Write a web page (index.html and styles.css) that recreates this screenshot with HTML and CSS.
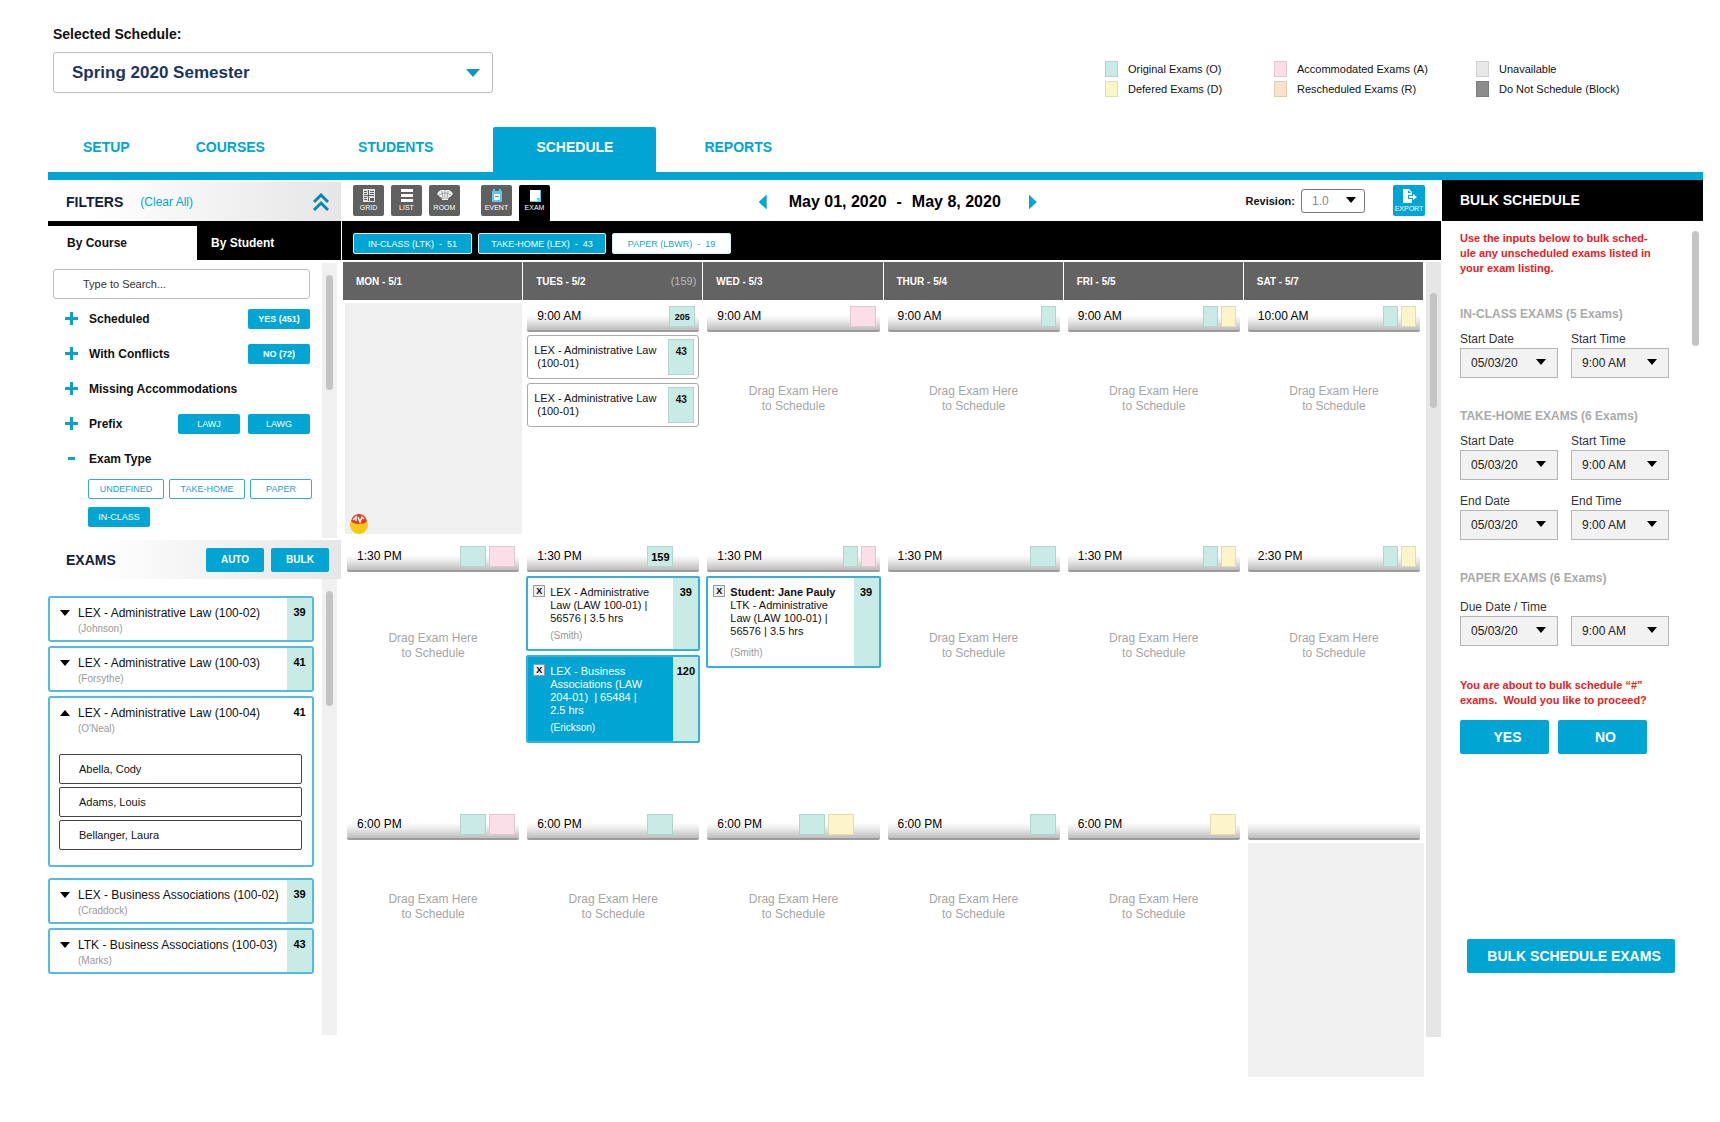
FILE: index.html
```html
<!DOCTYPE html>
<html lang="en">
<head>
    <meta charset="UTF-8">
    <title>Exam Schedule</title>
    <link rel="stylesheet" href="styles.css">
</head>
<body>
    <header class="page-header">
        <div class="schedule-picker">
            <label for="schedule">Selected Schedule:</label>
            <div class="select select-schedule">
                <select id="schedule"><option>Spring 2020 Semester</option></select>
            </div>
        </div>
        <ul class="legend">
            <li><span class="key original"></span>Original Exams (O)</li>
            <li><span class="key accommodated"></span>Accommodated Exams (A)</li>
            <li><span class="key unavailable"></span>Unavailable</li>
            <li><span class="key defered"></span>Defered Exams (D)</li>
            <li><span class="key rescheduled"></span>Rescheduled Exams (R)</li>
            <li><span class="key blocked"></span>Do Not Schedule (Block)</li>
        </ul>
    </header>

    <nav class="main-tabs">
        <a href="#" class="tab">SETUP</a>
        <a href="#" class="tab">COURSES</a>
        <a href="#" class="tab tab-wide">STUDENTS</a>
        <a href="#" class="tab active">SCHEDULE</a>
        <a href="#" class="tab">REPORTS</a>
    </nav>

    <main class="workspace">
        <aside class="sidebar">
            <div class="panel-head">
                <h2>FILTERS</h2>
                <a href="#" class="clear">(Clear All)</a>
                <button class="collapse" aria-label="Collapse filters">
                    <svg width="16" height="18" viewBox="0 0 16 18" fill="none" stroke="#0d86ad" stroke-width="3"><path d="M1 9l7-7 7 7M1 17l7-7 7 7"/></svg>
                </button>
            </div>
            <div class="filter-tabs">
                <button class="filter-tab current">By Course</button>
                <button class="filter-tab">By Student</button>
            </div>
            <div class="scroll-area filter-area">
                <div class="filters">
                    <input class="search" type="text" placeholder="Type to Search..." aria-label="Search">
                    <div class="filter-row"><span class="plus"></span><b>Scheduled</b><button class="chip strong">YES (451)</button></div>
                    <div class="filter-row"><span class="plus"></span><b>With Conflicts</b><button class="chip strong">NO (72)</button></div>
                    <div class="filter-row"><span class="plus"></span><b>Missing Accommodations</b></div>
                    <div class="filter-row"><span class="plus"></span><b>Prefix</b><button class="chip">LAWJ</button><button class="chip">LAWG</button></div>
                    <div class="filter-row"><span class="minus"></span><b>Exam Type</b></div>
                    <div class="type-chips">
                        <button class="chip outline long">UNDEFINED</button>
                        <button class="chip outline long">TAKE-HOME</button>
                        <button class="chip outline">PAPER</button>
                        <button class="chip">IN-CLASS</button>
                    </div>
                </div>
                <div class="track"><div class="thumb"></div></div>
            </div>

            <div class="panel-head exams-head">
                <h2>EXAMS</h2>
                <button class="small-btn">AUTO</button>
                <button class="small-btn">BULK</button>
            </div>
            <div class="scroll-area exam-area">
                <div class="exam-list">
                    <div class="exam-item">
                        <button class="caret" aria-label="Expand"></button>
                        <div class="exam-name">LEX - Administrative Law (100-02)<small>(Johnson)</small></div>
                        <div class="count">39</div>
                    </div>
                    <div class="exam-item">
                        <button class="caret" aria-label="Expand"></button>
                        <div class="exam-name">LEX - Administrative Law (100-03)<small>(Forsythe)</small></div>
                        <div class="count">41</div>
                    </div>
                    <div class="exam-item open">
                        <button class="caret up" aria-label="Collapse"></button>
                        <div class="exam-name">LEX - Administrative Law (100-04)<small>(O'Neal)</small></div>
                        <div class="count">41</div>
                        <ul class="students">
                            <li>Abella, Cody</li>
                            <li>Adams, Louis</li>
                            <li>Bellanger, Laura</li>
                        </ul>
                    </div>
                    <div class="exam-item">
                        <button class="caret" aria-label="Expand"></button>
                        <div class="exam-name">LEX - Business Associations (100-02)<small>(Craddock)</small></div>
                        <div class="count">39</div>
                    </div>
                    <div class="exam-item">
                        <button class="caret" aria-label="Expand"></button>
                        <div class="exam-name">LTK - Business Associations (100-03)<small>(Marks)</small></div>
                        <div class="count">43</div>
                    </div>
                </div>
                <div class="track"><div class="thumb"></div></div>
            </div>
        </aside>

        <section class="calendar">
            <div class="toolbar">
                <div class="views">
                    <button class="view">
                        <svg width="14" height="13" viewBox="0 0 14 13"><path fill="#e4e4e4" d="M1 0h12v13H1z"/><path fill="#606060" d="M2 2h3v1H2zM2 4h3v1H2zM6 1h1v11H6zM8 2h4v1H8zM8 4h4v1H8zM2 6h10v1H2zM2 8h3v1H2zM2 10h3v1H2zM8 9h4v3H8z"/></svg>
                        GRID
                    </button>
                    <button class="view">
                        <svg width="14" height="13" viewBox="0 0 14 13"><path fill="#fff" d="M1 0h12v3H1zM1 5h12v3H1zM1 10h12v3H1z"/></svg>
                        LIST
                    </button>
                    <button class="view">
                        <svg width="16" height="13" viewBox="0 0 16 13"><path fill="#eee" d="M0 5Q2 1 5 1h6q3 0 5 4l-3 3q-2 0-2 3H5q0-3-2-3z"/><path stroke="#8a8a8a" stroke-width=".7" fill="none" d="M2 6Q8 2 14 6M5 2l1 8M11 2l-1 8M8 1v9"/></svg>
                        ROOM
                    </button>
                    <button class="view event">
                        <svg width="14" height="13" viewBox="0 0 14 13"><path fill="#5cc8ee" d="M2 2h1V0h2v2h4V0h2v2h1v11H2z"/><path fill="#fff" d="M4 5h6v6H4z"/><path fill="#1fa5d2" d="M5 7h4v1H5z"/></svg>
                        EVENT
                    </button>
                    <button class="view selected">
                        <svg width="14" height="13" viewBox="0 0 14 13"><path fill="#5cc8ee" d="M2 1h11v12H2z"/><path fill="#fff" d="M2 1h10v9l-2 2H2z"/><path fill="#5cc8ee" d="M9 12V9h4z"/></svg>
                        EXAM
                    </button>
                </div>
                <div class="dates">
                    <button class="step prev" aria-label="Previous week"></button>
                    <span>May 01, 2020</span><span>-</span><span>May 8, 2020</span>
                    <button class="step next" aria-label="Next week"></button>
                </div>
                <div class="revision">
                    <label for="revision">Revision:</label>
                    <div class="select select-revision"><select id="revision"><option>1.0</option></select></div>
                    <button class="view export">
                        <svg width="18" height="14" viewBox="0 0 18 14"><path fill="#fff" d="M3 0h6l3 3v3H8v4h4v4H3z"/><path fill="#fff" d="M9 7h4V5l4 3-4 3V9H9z"/><path fill="#00a5d3" d="M8 1v3h3z"/></svg>
                        EXPORT
                    </button>
                </div>
            </div>
            <div class="type-bar">
                <button class="type-btn">IN-CLASS (LTK) &nbsp;- &nbsp;51</button>
                <button class="type-btn wide">TAKE-HOME (LEX) &nbsp;- &nbsp;43</button>
                <button class="type-btn off">PAPER (LBWR) &nbsp;- &nbsp;19</button>
            </div>
            <div class="scroll-area calendar-area">
                <div class="days">
                    <div class="day">MON - 5/1</div>
                    <div class="day">TUES - 5/2 <span>(159)</span></div>
                    <div class="day">WED - 5/3</div>
                    <div class="day">THUR - 5/4</div>
                    <div class="day">FRI - 5/5</div>
                    <div class="day">SAT - 5/7</div>

                    <!-- morning -->
                    <div class="cell morning closed">
                        <svg class="warning" width="20" height="22" viewBox="0 0 20 22"><circle cx="10" cy="12" r="9" fill="#fbc70f"/><path d="M2 8Q4 1 10 1t8 7q-2 3-8 3T2 8z" fill="#e23a22"/><path d="M4 7l3-3v4M9 4l2 5 2-5 2 2" fill="none" stroke="#fff" stroke-width="1.5"/></svg>
                    </div>
                    <div class="cell morning">
                        <div class="time">9:00 AM<i class="key original big">205</i></div>
                        <div class="slot-exam"><p>LEX - Administrative Law<br>&nbsp;(100-01)</p><i class="key original">43</i></div>
                        <div class="slot-exam"><p>LEX - Administrative Law<br>&nbsp;(100-01)</p><i class="key original">43</i></div>
                    </div>
                    <div class="cell morning">
                        <div class="time">9:00 AM<i class="key accommodated big"></i></div>
                        <p class="drop">Drag Exam Here<br>to Schedule</p>
                    </div>
                    <div class="cell morning">
                        <div class="time">9:00 AM<i class="key original"></i></div>
                        <p class="drop">Drag Exam Here<br>to Schedule</p>
                    </div>
                    <div class="cell morning">
                        <div class="time">9:00 AM<i class="key original"></i><i class="key defered"></i></div>
                        <p class="drop">Drag Exam Here<br>to Schedule</p>
                    </div>
                    <div class="cell morning">
                        <div class="time">10:00 AM<i class="key original"></i><i class="key defered"></i></div>
                        <p class="drop">Drag Exam Here<br>to Schedule</p>
                    </div>

                    <!-- afternoon -->
                    <div class="cell afternoon">
                        <div class="time">1:30 PM<i class="key original big"></i><i class="key accommodated big"></i></div>
                        <p class="drop">Drag Exam Here<br>to Schedule</p>
                    </div>
                    <div class="cell afternoon">
                        <div class="time inset">1:30 PM<i class="key original big total">159</i></div>
                        <div class="booked">
                            <button class="remove" aria-label="Remove">X</button>
                            <div class="details"><p>LEX - Administrative<br>Law (LAW 100-01) |<br>56576 | 3.5 hrs</p><small>(Smith)</small></div>
                            <div class="count">39</div>
                        </div>
                        <div class="booked picked">
                            <button class="remove" aria-label="Remove">X</button>
                            <div class="details"><p>LEX - Business<br>Associations (LAW<br>204-01) &nbsp;| 65484 |<br>2.5 hrs</p><small>(Erickson)</small></div>
                            <div class="count">120</div>
                        </div>
                    </div>
                    <div class="cell afternoon">
                        <div class="time">1:30 PM<i class="key original"></i><i class="key accommodated"></i></div>
                        <div class="booked student">
                            <button class="remove" aria-label="Remove">X</button>
                            <div class="details"><p><b>Student: Jane Pauly</b><br>LTK - Administrative<br>Law (LAW 100-01) |<br>56576 | 3.5 hrs</p><small>(Smith)</small></div>
                            <div class="count">39</div>
                        </div>
                    </div>
                    <div class="cell afternoon">
                        <div class="time">1:30 PM<i class="key original big"></i></div>
                        <p class="drop">Drag Exam Here<br>to Schedule</p>
                    </div>
                    <div class="cell afternoon">
                        <div class="time">1:30 PM<i class="key original"></i><i class="key defered"></i></div>
                        <p class="drop">Drag Exam Here<br>to Schedule</p>
                    </div>
                    <div class="cell afternoon">
                        <div class="time">2:30 PM<i class="key original"></i><i class="key defered"></i></div>
                        <p class="drop">Drag Exam Here<br>to Schedule</p>
                    </div>

                    <!-- evening -->
                    <div class="cell evening">
                        <div class="time">6:00 PM<i class="key original big"></i><i class="key accommodated big"></i></div>
                        <p class="drop">Drag Exam Here<br>to Schedule</p>
                    </div>
                    <div class="cell evening">
                        <div class="time inset">6:00 PM<i class="key original big"></i></div>
                        <p class="drop">Drag Exam Here<br>to Schedule</p>
                    </div>
                    <div class="cell evening">
                        <div class="time inset">6:00 PM<i class="key original big"></i><i class="key defered big"></i></div>
                        <p class="drop">Drag Exam Here<br>to Schedule</p>
                    </div>
                    <div class="cell evening">
                        <div class="time">6:00 PM<i class="key original big"></i></div>
                        <p class="drop">Drag Exam Here<br>to Schedule</p>
                    </div>
                    <div class="cell evening">
                        <div class="time">6:00 PM<i class="key defered big"></i></div>
                        <p class="drop">Drag Exam Here<br>to Schedule</p>
                    </div>
                    <div class="cell evening">
                        <div class="time"></div>
                        <div class="closed-slot"></div>
                    </div>
                </div>
                <div class="track"><div class="thumb"></div></div>
            </div>
        </section>

        <aside class="bulk">
            <h2 class="bulk-head">BULK SCHEDULE</h2>
            <div class="bulk-area">
                <form class="bulk-form">
                    <p class="alert">Use the inputs below to bulk sched-<br>ule any unscheduled exams listed in<br>your exam listing.</p>
                    <h3>IN-CLASS EXAMS (5 Exams)</h3>
                    <div class="fields">
                        <div class="field"><label for="ic-date">Start Date</label><div class="select"><select id="ic-date"><option>05/03/20</option></select></div></div>
                        <div class="field"><label for="ic-time">Start Time</label><div class="select"><select id="ic-time"><option>9:00 AM</option></select></div></div>
                    </div>
                    <h3>TAKE-HOME EXAMS (6 Exams)</h3>
                    <div class="fields">
                        <div class="field"><label for="th-date">Start Date</label><div class="select"><select id="th-date"><option>05/03/20</option></select></div></div>
                        <div class="field"><label for="th-time">Start Time</label><div class="select"><select id="th-time"><option>9:00 AM</option></select></div></div>
                        <div class="field"><label for="th-end-date">End Date</label><div class="select"><select id="th-end-date"><option>05/03/20</option></select></div></div>
                        <div class="field"><label for="th-end-time">End Time</label><div class="select"><select id="th-end-time"><option>9:00 AM</option></select></div></div>
                    </div>
                    <h3>PAPER EXAMS (6 Exams)</h3>
                    <div class="fields due">
                        <div class="field"><label for="p-date">Due Date / Time</label><div class="select"><select id="p-date"><option>05/03/20</option></select></div></div>
                        <div class="field"><div class="select"><select aria-label="Due time"><option>9:00 AM</option></select></div></div>
                    </div>
                    <p class="alert confirm">You are about to bulk schedule “#”<br>exams. &nbsp;Would you like to proceed?</p>
                    <div class="answers">
                        <button type="button" class="btn">YES</button>
                        <button type="button" class="btn">NO</button>
                    </div>
                    <button type="button" class="btn submit">BULK SCHEDULE EXAMS</button>
                </form>
                <div class="thumb"></div>
            </div>
        </aside>
    </main>
</body>
</html>
```
FILE: styles.css
```css
* {
    box-sizing: border-box;
}
body {
    margin: 0;
    padding: 24px 17px 24px 48px;
    background: #fff;
    color: #111;
    font-family: "Liberation Sans", Arial, sans-serif;
    font-size: 12px;
}
h2, h3, p, ul {
    margin: 0;
    padding: 0;
}
ul {
    list-style: none;
}
a {
    color: #00a5d3;
    text-decoration: none;
}
button, select, input {
    font-family: inherit;
    margin: 0;
}
button {
    padding: 0;
    border: 0;
    cursor: pointer;
}
i {
    font-style: normal;
}
h2 {
    font-size: 14px;
    color: #14203a;
}

/* select boxes */
.select {
    position: relative;
}
.select::after {
    content: "";
    position: absolute;
    right: 12px;
    top: 50%;
    margin-top: -4px;
    border: 5px solid transparent;
    border-top: 6px solid #000;
    border-bottom: 0;
    pointer-events: none;
}
.select select {
    appearance: none;
    width: 100%;
    height: 30px;
    padding: 0 10px;
    border: 1px solid #b5b5b5;
    border-radius: 0;
    background: #f2f2f2;
    color: #222;
    font-size: 12px;
}

/* header */
.page-header {
    display: flex;
    justify-content: space-between;
    align-items: flex-start;
    padding-left: 5px;
}
.schedule-picker label {
    display: block;
    margin-bottom: 8px;
    font-size: 14px;
    font-weight: bold;
    line-height: 20px;
}
.select-schedule {
    width: 440px;
}
.select-schedule select {
    height: 41px;
    padding: 0 18px;
    border-color: #bbb;
    border-radius: 3px;
    background: #fff;
    color: #1b355e;
    font-size: 17px;
    font-weight: bold;
}
.select-schedule::after {
    border-width: 8px 7px 0;
    border-top-color: #0b97c6;
    right: 13px;
}
.legend {
    display: grid;
    grid-template-columns: 169px 202px 150px;
    row-gap: 4px;
    margin: 37px 77px 0 0;
    font-size: 11px;
}
.legend li {
    display: flex;
    align-items: center;
    gap: 10px;
    height: 16px;
}
.key {
    flex: none;
    width: 13px;
    height: 16px;
    border: 1px solid rgba(0, 0, 0, .1);
}
.original { background: #c8ebe5; }
.accommodated { background: #fadfe9; }
.unavailable { background: #e8e8e8; }
.defered { background: #fcf5c9; }
.rescheduled { background: #f8e3c8; }
.blocked { background: #8c8c8c; }

/* main tabs */
.main-tabs {
    display: flex;
    margin-top: 30px;
    padding-left: 2px;
    border-bottom: 8px solid #00a5d3;
}
.tab {
    height: 45px;
    padding: 0 33px;
    border-radius: 2px 2px 0 0;
    font-size: 14px;
    font-weight: bold;
    line-height: 40px;
}
.tab-wide {
    padding: 0 60px;
}
.tab.active {
    padding: 0 43px;
    margin-right: 15px;
    background: #00a5d3;
    color: #fff;
}

.workspace {
    display: grid;
    grid-template-columns: 293px 1fr 261px;
    column-gap: 1px;
    align-items: start;
}
.scroll-area {
    display: flex;
    justify-content: space-between;
}
.track {
    flex: none;
    width: 15px;
    padding: 0 4px;
    background: #f0f0f0;
}
.thumb {
    flex: none;
    width: 7px;
    height: 115px;
    border-radius: 4px;
    background: #c4c4c4;
}

/* left column */
.panel-head {
    display: flex;
    align-items: center;
    height: 39px;
    margin-top: 2px;
    padding: 0 12px 0 18px;
    background: linear-gradient(90deg, #fff 15%, #e6e6e6);
}
.clear {
    margin-left: 17px;
}
.collapse {
    margin-left: auto;
    background: none;
    line-height: 0;
}
.filter-tabs {
    display: flex;
    height: 39px;
    background: #000;
    padding-top: 5px;
}
.filter-tab {
    flex: 1;
    padding-left: 14px;
    background: #000;
    color: #fff;
    font-size: 12px;
    font-weight: bold;
    text-align: left;
}
.filter-tab.current {
    padding-left: 19px;
    background: #fff;
    color: #111;
}
.filter-area {
    height: 275px;
    margin: 3px 4px 0 0;
}
.filter-area .track {
    padding-top: 12px;
}
.filters {
    width: 262px;
    padding: 6px 0 0 5px;
}
.search {
    display: block;
    width: 100%;
    height: 30px;
    margin-bottom: 2px;
    padding: 0 29px;
    border: 1px solid #bbb;
    border-radius: 3px;
    font-size: 11px;
}
.search::placeholder {
    color: #333;
}
.filter-row {
    display: flex;
    align-items: center;
    gap: 8px;
    height: 35px;
    padding-left: 12px;
}
.filter-row b {
    flex: 1;
    margin-left: 3px;
}
.plus, .minus {
    width: 13px;
    height: 13px;
    background: linear-gradient(#0da0cd, #0da0cd) center / 13px 3px no-repeat,
                linear-gradient(#0da0cd, #0da0cd) center / 3px 13px no-repeat;
}
.minus {
    background: linear-gradient(#0da0cd, #0da0cd) center / 7px 3px no-repeat;
}
.chip {
    width: 62px;
    height: 20px;
    border-radius: 2px;
    background: #00a5d3;
    color: #fff;
    font-size: 9px;
}
.chip.strong {
    font-weight: bold;
}
.chip.outline {
    border: 1px solid #35acd0;
    background: #fff;
    color: #1a9fc9;
}
.chip.long {
    width: 76px;
}
.type-chips {
    display: flex;
    flex-wrap: wrap;
    gap: 8px 5px;
    margin-right: -4px;
    padding: 3px 0 0 35px;
}

.exams-head {
    gap: 7px;
    margin-top: 2px;
}
.exams-head h2 {
    flex: 1;
}
.small-btn {
    width: 58px;
    height: 24px;
    border-radius: 2px;
    background: #00a5d3;
    color: #fff;
    font-size: 10px;
    font-weight: bold;
}
.exam-area {
    min-height: 456px;
    margin-right: 4px;
}
.exam-area .track {
    padding-top: 12px;
}
.exam-list {
    width: 266px;
    padding-top: 17px;
}
.exam-item {
    display: flex;
    flex-wrap: wrap;
    margin-bottom: 4px;
    border: 2px solid #53bcdc;
    border-radius: 3px;
}
.caret {
    width: 10px;
    height: 6px;
    margin: 12px 8px 0 10px;
    background: #000;
    clip-path: polygon(0 0, 100% 0, 50% 100%);
}
.caret.up {
    clip-path: polygon(0 100%, 50% 0, 100% 100%);
}
.exam-name {
    flex: 1;
    padding-top: 7px;
    line-height: 16px;
    white-space: nowrap;
}
.exam-name small {
    display: block;
    height: 19px;
    color: #999;
    font-size: 10px;
}
.count {
    width: 25px;
    padding-top: 8px;
    background: #c8ebe5;
    color: #000;
    font-size: 11px;
    font-weight: bold;
    text-align: center;
}
.exam-item.open {
    margin-bottom: 11px;
}
.open .count {
    background: none;
}
.students {
    display: flex;
    flex-direction: column;
    gap: 3px;
    width: 100%;
    padding: 14px 10px 15px 9px;
}
.students li {
    height: 30px;
    padding-left: 19px;
    border: 1px solid #444;
    border-radius: 2px;
    font-size: 11px;
    line-height: 28px;
}

/* calendar */
.toolbar {
    display: flex;
    justify-content: space-between;
    align-items: flex-start;
    height: 41px;
    padding: 5px 16px 0 11px;
}
.views {
    display: flex;
    gap: 7px;
}
.view {
    display: flex;
    flex-direction: column;
    align-items: center;
    justify-content: center;
    gap: 2px;
    width: 31px;
    height: 31px;
    border-radius: 2px;
    background: #606060;
    color: #fff;
    font-size: 7px;
    line-height: 8px;
}
.view.event {
    margin-left: 14px;
}
.view.selected {
    height: 37px;
    padding-bottom: 6px;
    background: #000;
}
.view.export {
    width: 32px;
    margin-left: 28px;
    background: #00a5d3;
}
.dates {
    display: flex;
    align-items: center;
    gap: 10px;
    height: 34px;
    color: #000;
    font-size: 16px;
    font-weight: bold;
}
.step {
    width: 8px;
    height: 15px;
    background: #00a5d3;
}
.prev {
    margin-right: 12px;
    clip-path: polygon(100% 0, 100% 100%, 0 50%);
}
.next {
    margin-left: 18px;
    clip-path: polygon(0 0, 100% 50%, 0 100%);
}
.revision {
    display: flex;
    align-items: center;
    font-size: 11px;
    font-weight: bold;
}
.select-revision {
    width: 64px;
    margin-left: 6px;
}
.select-revision select {
    height: 24px;
    border-color: #777;
    border-radius: 3px;
    background: #fff;
    color: #888;
}
.select-revision::after {
    right: 9px;
}
.type-bar {
    display: flex;
    gap: 6px;
    height: 39px;
    padding: 12px 0 0 11px;
    background: #000;
}
.type-btn {
    width: 119px;
    height: 21px;
    border: 1px solid #d4eff8;
    border-radius: 2px;
    background: #00a5d3;
    color: #fff;
    font-size: 9px;
}
.type-btn.wide {
    width: 128px;
}
.type-btn.off {
    background: #fff;
    color: #1a9fc9;
}
.calendar-area {
    gap: 2px;
    margin-top: 2px;
    padding-left: 1px;
    align-items: flex-start;
}
.calendar-area .track {
    height: 775px;
    padding-top: 31px;
    background: #e6e6e6;
}
.days {
    flex: 1;
    display: grid;
    grid-template-columns: repeat(6, 1fr);
}
.day {
    display: flex;
    justify-content: space-between;
    align-items: center;
    height: 38px;
    margin-right: 1px;
    padding: 0 6px 0 13px;
    background: #636363;
    color: #fff;
    font-size: 10px;
    font-weight: bold;
}
.day span {
    color: #bbb;
    font-size: 11px;
    font-weight: normal;
}
.cell {
    padding: 2px 4px 0;
}
.morning {
    min-height: 240px;
}
.afternoon {
    min-height: 268px;
}
.evening {
    min-height: 270px;
}
.closed {
    position: relative;
    margin: 3px 1px 6px 2px;
    min-height: 231px;
    background: #f0f0f0;
}
.warning {
    position: absolute;
    left: 4px;
    bottom: -1px;
}
.closed-slot {
    height: 234px;
    margin: 3px -4px 0 0;
    background: #f0f0f0;
}
.time {
    display: flex;
    align-items: center;
    gap: 3px;
    height: 30px;
    padding: 0 4px 0 10px;
    border-bottom: 2px solid #9c9c9c;
    border-radius: 0 0 2px 2px;
    background: linear-gradient(#fff 45%, #ededed 65%, #bdbdbd);
    color: #000;
}
.time.inset {
    padding-right: 26px;
}
.time .key {
    width: 15px;
    height: 21px;
    font-size: 9px;
    font-weight: bold;
    line-height: 20px;
    text-align: center;
}
.time .key:first-child {
    margin-left: auto;
}
.time .big {
    width: 26px;
}
.time .total {
    font-size: 11px;
}
.drop {
    padding-top: 52px;
    color: #a5a5a5;
    line-height: 15px;
    text-align: center;
}
.afternoon .drop {
    padding-top: 59px;
}
.slot-exam {
    display: flex;
    justify-content: space-between;
    height: 44px;
    margin: 3px 0 4px;
    padding: 3px 4px 0 6px;
    border: 1px solid #aaa;
    border-radius: 3px;
    font-size: 11px;
}
.slot-exam p {
    padding-top: 5px;
    line-height: 13px;
    white-space: nowrap;
}
.slot-exam .key {
    width: 26px;
    height: 36px;
    font-size: 10px;
    font-weight: bold;
    line-height: 24px;
    text-align: center;
}
.booked {
    display: flex;
    margin: 4px -1px 0;
    border: 2px solid #35b1d9;
    border-radius: 2px;
    font-size: 11px;
    line-height: 13px;
}
.remove {
    flex: none;
    width: 12px;
    height: 12px;
    margin: 7px 5px 0;
    border: 1px solid #999;
    background: #eee;
    color: #000;
    font-size: 9px;
    font-weight: bold;
    line-height: 10px;
}
.details {
    flex: 1;
    padding: 8px 0 7px;
    white-space: nowrap;
}
.details small {
    display: block;
    margin-top: 4px;
    color: #999;
    font-size: 10px;
}
.student small {
    margin-top: 8px;
}
.picked {
    background: #00a5d3;
    color: #fff;
}
.picked small {
    color: #fff;
}

/* bulk schedule */
.bulk-head {
    height: 41px;
    padding-left: 18px;
    background: #000;
    color: #fff;
    line-height: 40px;
}
.bulk-area {
    display: flex;
    justify-content: space-between;
    padding: 10px 4px 0 18px;
}
.bulk-form {
    width: 218px;
}
.alert {
    color: #e8201c;
    font-size: 11px;
    font-weight: bold;
    line-height: 15px;
    white-space: nowrap;
}
.bulk-form h3 {
    margin: 31px 0 11px;
    color: #aaa;
    font-size: 12px;
    line-height: 14px;
}
.fields {
    display: grid;
    grid-template-columns: 98px 98px;
    gap: 14px 13px;
    align-items: end;
}
.field label {
    display: block;
    margin-bottom: 2px;
    color: #333;
    font-size: 12px;
    line-height: 14px;
}
.due {
    padding-top: 4px;
}
.confirm {
    margin-top: 32px;
}
.answers {
    display: flex;
    gap: 9px;
    margin-top: 12px;
}
.btn {
    width: 89px;
    height: 34px;
    padding-left: 6px;
    border-radius: 2px;
    background: #00a5d3;
    color: #fff;
    font-size: 14px;
    font-weight: bold;
}
.submit {
    width: 208px;
    margin: 185px 0 0 7px;
}
```
